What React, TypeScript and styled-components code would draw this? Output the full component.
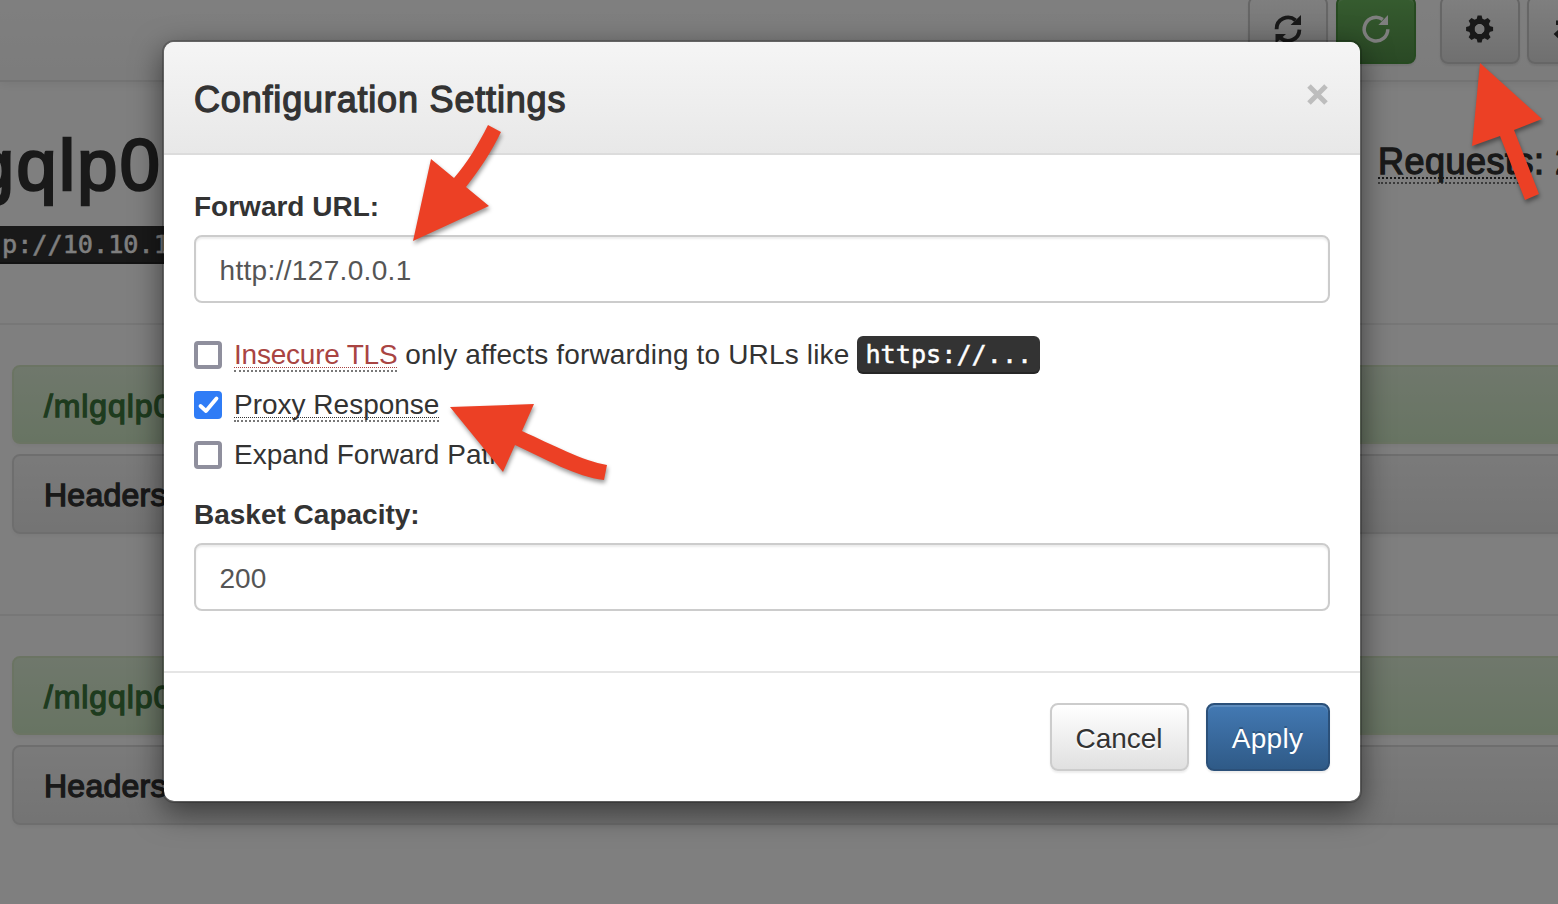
import React from "react";
import styled, { createGlobalStyle, css } from "styled-components";

const Global = createGlobalStyle`
  * { box-sizing: border-box; }
  html, body { margin: 0; padding: 0; overflow: hidden; }
  body { font-family: "Liberation Sans", Arial, sans-serif; font-size: 28px; line-height: 40px; color: #333; background: #fff; }
`;

const medium = css<{ $stroke?: number }>`
  font-weight: 400;
  -webkit-text-stroke: ${(p) => p.$stroke ?? 1.3}px currentColor;
`;

const Screen = styled.div`
  position: relative;
  width: 1558px;
  height: 904px;
  overflow: hidden;
`;

const Page = styled.div`
  width: 1558px;
  height: 904px;
  overflow: hidden;
  display: flex;
  flex-direction: column;
`;

const Navbar = styled.header`
  flex: none;
  height: 82px;
  display: flex;
  justify-content: flex-end;
  background: linear-gradient(#fff, #f8f8f8);
  border-bottom: 2px solid #e7e7e7;
  box-shadow: 0 2px 10px rgba(0, 0, 0, 0.075);
`;

const Tools = styled.div`
  display: flex;
  gap: 8px;
  margin-top: -4px;
  margin-right: -50px;
`;

const ToolButton = styled.button<{ $green?: boolean; $offset?: number }>`
  width: 80px;
  height: 68px;
  padding: 0;
  margin: 0 0 0 ${(p) => p.$offset ?? 0}px;
  display: flex;
  align-items: center;
  justify-content: center;
  border-radius: 8px;
  border: 2px solid ${(p) => (p.$green ? "#4c9440" : "#ccc")};
  background: ${(p) => (p.$green ? "linear-gradient(#6cb85f, #54924a)" : "linear-gradient(#fff, #e0e0e0)")};
  color: ${(p) => (p.$green ? "#fff" : "#333")};
  box-shadow: inset 0 2px 0 rgba(255, 255, 255, 0.15), 0 2px 2px rgba(0, 0, 0, 0.075);
  svg { display: block; width: 28px; height: 28px; overflow: visible; margin-top: -2px; }
  &:last-child { margin-right: 1px; }
`;

const Intro = styled.section`
  flex: none;
  height: 243px;
  display: flex;
  justify-content: space-between;
  border-bottom: 2px solid #eee;
  padding-top: 43px;
`;

const BasketTitle = styled.h1`
  ${medium}
  margin: 0 0 0 -26px;
  font-size: 72px;
  line-height: 80px;
  letter-spacing: 2.4px;
`;

const BasketCode = styled.code`
  display: block;
  width: 300px;
  height: 38px;
  margin-top: 21px;
  padding-left: 2px;
  background: #333;
  color: #fff;
  font: 25.2px/38px "DejaVu Sans Mono", monospace;
  -webkit-text-stroke: 0.5px currentColor;
  box-shadow: inset 0 -2px 0 rgba(0, 0, 0, 0.25);
`;

const Counter = styled.div`
  ${medium}
  width: 180px;
  padding-top: 17px;
  font-size: 36px;
  line-height: 40px;
  letter-spacing: 0.5px;
  white-space: nowrap;
`;

const Abbr = styled.abbr<{ $danger?: boolean; $large?: boolean }>`
  display: inline-block;
  line-height: ${(p) => (p.$large ? 40 : 30)}px;
  color: ${(p) => (p.$danger ? "#a94442" : "inherit")};
  letter-spacing: ${(p) => (p.$danger ? "-0.22px" : "inherit")};
  text-decoration: none;
  border-bottom: 2px dotted #777;
  background: ${(p) =>
    p.$large
      ? "repeating-linear-gradient(90deg, currentColor 0 2px, transparent 2px 4px) 0 calc(100% - 3px) / 100% 2px no-repeat"
      : "repeating-linear-gradient(90deg, currentColor 0 1px, transparent 1px 2px) 0 calc(100% - 2px) / 100% 1px no-repeat"};
`;

const RequestEntry = styled.section`
  flex: none;
  height: 291px;
  padding: 40px 0 0 12px;
  border-bottom: 2px solid #eee;
  &:last-child { border: 0; }
`;

const Panel = styled.div<{ $success?: boolean }>`
  ${medium}
  width: 1600px;
  height: ${(p) => (p.$success ? 79 : 80)}px;
  margin-bottom: 10px;
  padding: 0 30px;
  border: 2px solid ${(p) => (p.$success ? "#d6e9c6" : "#ddd")};
  border-radius: 8px;
  background: ${(p) => (p.$success ? "linear-gradient(#dff0d8, #d0e9c6)" : "linear-gradient(#f5f5f5, #e8e8e8)")};
  color: ${(p) => (p.$success ? "#3c763d" : "#333")};
  box-shadow: 0 2px 4px rgba(0, 0, 0, 0.05);
  font-size: 32px;
  line-height: 78px;
  letter-spacing: ${(p) => (p.$success ? 0.9 : 0.25)}px;
`;

const Backdrop = styled.div`
  position: absolute;
  inset: 0;
  background: rgba(0, 0, 0, 0.5);
`;

const Modal = styled.div`
  position: absolute;
  left: 162px;
  top: 40px;
  width: 1200px;
  height: 763px;
  display: flex;
  flex-direction: column;
  border: 2px solid rgba(0, 0, 0, 0.2);
  border-radius: 12px;
  background: #fff;
  background-clip: padding-box;
  box-shadow: 0 10px 30px rgba(0, 0, 0, 0.5);
`;

const ModalHeader = styled.div`
  flex: none;
  height: 113px;
  padding: 37px 30px 0;
  display: flex;
  justify-content: space-between;
  background: linear-gradient(#f5f5f5, #e8e8e8);
  border-bottom: 2px solid #dcdcdc;
  border-radius: 10px 10px 0 0;
`;

const ModalTitle = styled.h4`
  ${medium}
  margin: 0;
  font-size: 36px;
  line-height: 42px;
  letter-spacing: 0.82px;
`;

const CloseButton = styled.button`
  width: 24px;
  height: 24px;
  margin: 4px 0 0;
  padding: 0;
  border: 0;
  background: none;
  svg { display: block; }
`;

const ModalBody = styled.div`
  flex: 1;
  padding: 32px 30px 0;
`;

const Label = styled.label`
  display: block;
  height: 40px;
  margin-bottom: 8px;
  font-weight: 700;
  line-height: 40px;
`;

const Input = styled.input<{ $spacing?: number }>`
  display: block;
  width: 100%;
  height: 68px;
  padding: 4px 23.5px 0;
  border: 2px solid #ccc;
  border-radius: 8px;
  background: #fff;
  color: #555;
  font: 28px/40px "Liberation Sans", Arial, sans-serif;
  letter-spacing: ${(p) => p.$spacing ?? 0}px;
  box-shadow: inset 0 2px 2px rgba(0, 0, 0, 0.075);
  outline: 0;
`;

const Options = styled.div`
  display: flex;
  flex-direction: column;
  gap: 10px;
  margin: 32px 0 20px;
`;

const Option = styled.div`
  height: 40px;
  display: flex;
  align-items: center;
  white-space: pre;
`;

const OptionText = styled.span<{ $spacing?: number }>`
  letter-spacing: ${(p) => p.$spacing ?? 0}px;
`;

const Checkbox = styled.span<{ $checked?: boolean }>`
  flex: none;
  width: 28px;
  height: 28px;
  margin-right: 12px;
  border-radius: 4px;
  border: ${(p) => (p.$checked ? "0" : "4px solid #8f8f9d")};
  background: ${(p) => (p.$checked ? "#2f7cf6" : "#fff")};
  svg { display: block; }
`;

const Code = styled.code`
  height: 38px;
  margin-left: 8px;
  padding: 0 8px;
  border-radius: 6px;
  background: #333;
  color: #fff;
  font: 25.2px/38px "DejaVu Sans Mono", monospace;
  -webkit-text-stroke: 0.5px currentColor;
  box-shadow: inset 0 -2px 0 rgba(0, 0, 0, 0.25);
`;

const ModalFooter = styled.div`
  flex: none;
  height: 130px;
  padding: 30px;
  display: flex;
  justify-content: flex-end;
  gap: 17px;
  border-top: 2px solid #e5e5e5;
`;

const Button = styled.button<{ $primary?: boolean }>`
  width: ${(p) => (p.$primary ? 124 : 139)}px;
  height: 68px;
  padding: 4px 1px 0 0;
  border-radius: 8px;
  border: 2px solid ${(p) => (p.$primary ? "#2b5079" : "#ccc")};
  background: ${(p) => (p.$primary ? "linear-gradient(#4379b3, #2f5a87)" : "linear-gradient(#fff, #e0e0e0)")};
  color: ${(p) => (p.$primary ? "#fff" : "#333")};
  font: 28px/40px "Liberation Sans", Arial, sans-serif;
  letter-spacing: ${(p) => (p.$primary ? 0.3 : 0)}px;
  text-shadow: ${(p) => (p.$primary ? "0 -2px 0 rgba(0,0,0,.2)" : "0 2px 0 #fff")};
  box-shadow: inset 0 2px 0 rgba(255, 255, 255, 0.15), 0 2px 2px rgba(0, 0, 0, 0.075);
`;

const Annotations = styled.svg`
  position: absolute;
  inset: 0;
  filter: drop-shadow(1px 3px 2px rgba(0, 0, 0, 0.4));
`;

const RefreshIcon = () => (
  <svg viewBox="0 0 28 28" fill="none">
    <path d="M2.6 14.2A11.4 11.4 0 0 1 21.5 5.3M25.4 14.6A11.4 11.4 0 0 1 6.5 23" stroke="currentColor" strokeWidth="3.8" />
    <path d="M27 0V10H16.6ZM1.5 28.5V19H12Z" fill="currentColor" />
  </svg>
);

const RepeatIcon = () => (
  <svg viewBox="0 0 28 28" fill="none">
    <path d="M25.8 14.2A11.8 11.8 0 1 1 20.8 4.5" stroke="currentColor" strokeWidth="3.5" />
    <path d="M26 0V9.9H16.4Z" fill="currentColor" />
  </svg>
);

const GearIcon = () => (
  <svg viewBox="0 0 28 28">
    <g fill="currentColor">
      {[0, 45, 90, 135].map((a) => (
        <path key={a} transform={`rotate(${a} 13.6 14)`} d="M10.4 5L11.6 .5H15.6L16.8 5V9H10.4ZM10.4 23L11.6 27.5H15.6L16.8 23V19H10.4Z" />
      ))}
    </g>
    <circle cx="13.6" cy="14" r="7.9" fill="none" stroke="currentColor" strokeWidth="5.4" />
  </svg>
);

const TransferIcon = () => (
  <svg viewBox="0 0 28 28" fill="currentColor">
    <path d="M3 5.5H18V0L27 7.7L18 15V10H3ZM.6 19L9 11.5V17H25V21.5H9V27Z" />
  </svg>
);

export default function App() {
  return (
    <Screen>
      <Global />
      <Page>
        <Navbar>
          <Tools>
            <ToolButton><RefreshIcon /></ToolButton>
            <ToolButton $green><RepeatIcon /></ToolButton>
            <ToolButton $offset={16}><GearIcon /></ToolButton>
            <ToolButton $offset={-1}><TransferIcon /></ToolButton>
          </Tools>
        </Navbar>
        <Intro>
          <div>
            <BasketTitle $stroke={2.6}>gqlp0</BasketTitle>
            <BasketCode>p://10.10.1</BasketCode>
          </div>
          <Counter><Abbr $large>Requests</Abbr>: 2</Counter>
        </Intro>
        {[0, 1].map((i) => (
          <RequestEntry key={i}>
            <Panel $success>/mlgqlp0</Panel>
            <Panel>Headers</Panel>
          </RequestEntry>
        ))}
      </Page>
      <Backdrop />
      <Modal>
        <ModalHeader>
          <ModalTitle>Configuration Settings</ModalTitle>
          <CloseButton>
            <svg width="24" height="24" viewBox="0 0 24 24">
              <path d="M3 3L20 20M20 3L3 20" stroke="#bdbdbd" strokeWidth="5" />
            </svg>
          </CloseButton>
        </ModalHeader>
        <ModalBody>
          <Label>Forward URL:</Label>
          <Input $spacing={0.33} defaultValue="http://127.0.0.1" />
          <Options>
            <Option>
              <Checkbox />
              <OptionText $spacing={0.16}><Abbr $danger>Insecure TLS</Abbr> only affects forwarding to URLs like</OptionText>
              <Code>https://...</Code>
            </Option>
            <Option>
              <Checkbox $checked>
                <svg width="28" height="28" viewBox="0 0 28 28" fill="none">
                  <path d="M6.5 15L12 20L22.5 7.5" stroke="#fff" strokeWidth="3.8" strokeLinecap="round" strokeLinejoin="round" />
                </svg>
              </Checkbox>
              <OptionText><Abbr>Proxy Response</Abbr></OptionText>
            </Option>
            <Option>
              <Checkbox />
              <OptionText>Expand Forward Path</OptionText>
            </Option>
          </Options>
          <Label>Basket Capacity:</Label>
          <Input defaultValue="200" />
        </ModalBody>
        <ModalFooter>
          <Button>Cancel</Button>
          <Button $primary>Apply</Button>
        </ModalFooter>
      </Modal>
      <Annotations width="1558" height="904" fill="#ec4025">
        <path d="M488 125L501 132C492 151 480 169 466 187L489 206L413 241L431 159L454 178C467 163 478 145 488 125Z" />
        <path d="M450 407L534 404L522 431C553 445 583 461 607 465L604 480C576 477 546 459 515 445L503 472Z" />
        <path d="M1480 63L1542 119L1514 130L1539 194L1525 200L1500 136L1472 146Z" />
      </Annotations>
    </Screen>
  );
}
